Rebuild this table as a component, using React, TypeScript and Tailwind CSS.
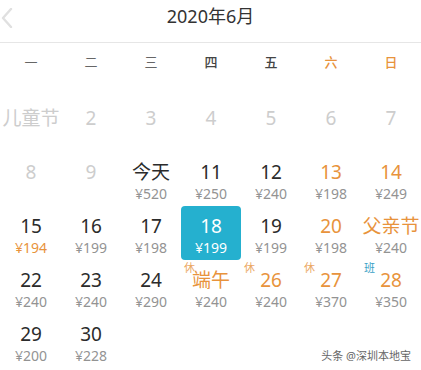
type Day = {
  label: string;
  price?: string;
  tone?: "gray" | "dark" | "orange";
  cheap?: boolean;
  tag?: "休" | "班";
  selected?: boolean;
};

const weekdays = ["一", "二", "三", "四", "五", "六", "日"];

const rows: (Day | null)[][] = [
  [
    { label: "儿童节", tone: "gray" },
    { label: "2", tone: "gray" },
    { label: "3", tone: "gray" },
    { label: "4", tone: "gray" },
    { label: "5", tone: "gray" },
    { label: "6", tone: "gray" },
    { label: "7", tone: "gray" },
  ],
  [
    { label: "8", tone: "gray" },
    { label: "9", tone: "gray" },
    { label: "今天", price: "¥520" },
    { label: "11", price: "¥250" },
    { label: "12", price: "¥240" },
    { label: "13", price: "¥198", tone: "orange" },
    { label: "14", price: "¥249", tone: "orange" },
  ],
  [
    { label: "15", price: "¥194", cheap: true },
    { label: "16", price: "¥199" },
    { label: "17", price: "¥198" },
    { label: "18", price: "¥199", selected: true },
    { label: "19", price: "¥199" },
    { label: "20", price: "¥198", tone: "orange" },
    { label: "父亲节", price: "¥240", tone: "orange" },
  ],
  [
    { label: "22", price: "¥240" },
    { label: "23", price: "¥240" },
    { label: "24", price: "¥290" },
    { label: "端午", price: "¥240", tone: "orange", tag: "休" },
    { label: "26", price: "¥240", tone: "orange", tag: "休" },
    { label: "27", price: "¥370", tone: "orange", tag: "休" },
    { label: "28", price: "¥350", tone: "orange", tag: "班" },
  ],
  [
    { label: "29", price: "¥200" },
    { label: "30", price: "¥228" },
    null,
    null,
    null,
    null,
    null,
  ],
];

const Cell = ({ day }: { day: Day | null }) => {
  if (!day) return <div className="h-[54px]" />;

  let numColor = "text-[#2b2b2b]";
  if (day.tone === "gray") numColor = "text-[#cdcdcd]";
  if (day.tone === "orange") numColor = "text-[#e8933c]";
  if (day.selected) numColor = "text-white";

  let priceColor = "text-[#939393]";
  if (day.cheap) priceColor = "text-[#e8933c]";
  if (day.selected) priceColor = "text-white";

  return (
    <div
      className={
        "relative flex h-[54px] flex-col items-center pt-[8px] " +
        (day.selected ? "rounded-[4px] bg-[#25b0cf]" : "")
      }
    >
      {day.tag && (
        <span
          className={
            "absolute left-[3px] top-[2px] text-[11px] leading-[11px] " +
            (day.tag === "班" ? "text-[#3a9fc6]" : "text-[#eba864]")
          }
        >
          {day.tag}
        </span>
      )}
      <span className={"text-[19px] leading-[25px] " + numColor}>{day.label}</span>
      {day.price && (
        <span className={"text-[14px] leading-[17px] " + priceColor}>{day.price}</span>
      )}
    </div>
  );
};

export default function App() {
  return (
    <div
      className="relative h-[370px] w-[421px] overflow-hidden bg-white"
      style={{ fontFamily: '"Noto Sans", "Noto Sans CJK SC", sans-serif' }}
    >
      <div className="relative flex h-[43px] items-center justify-center border-b border-[#e6e6e6]">
        <svg
          className="absolute left-[1px] top-[8px]"
          width="12"
          height="20"
          viewBox="0 0 12 20"
          fill="none"
        >
          <polyline
            points="10,1 2,10 10,19"
            stroke="#e0e0e0"
            strokeWidth="2.4"
            strokeLinecap="round"
            strokeLinejoin="round"
          />
        </svg>
        <span className="-mt-[10px] text-[18px] text-[#333]">2020年6月</span>
      </div>

      <div className="ml-[1px] grid h-[40px] w-[420px] grid-cols-7 items-center">
        {weekdays.map((w, i) => (
          <span
            key={w}
            className={
              "text-center text-[13px] " +
              (i >= 5
                ? "font-medium text-[#e8933c]"
                : i >= 3
                  ? "font-medium text-[#444]"
                  : "text-[#666]")
            }
          >
            {w}
          </span>
        ))}
      </div>

      <div className="ml-[1px] mt-[15px] grid w-[420px] grid-cols-7">
        {rows.map((row, r) =>
          row.map((day, c) => <Cell key={r + "-" + c} day={day} />)
        )}
      </div>

      <span
        className="absolute bottom-[6px] right-[10px] text-[11px] text-[#666]"
        style={{ textShadow: "0 0 2px #fff, 0 0 2px #fff" }}
      >
        头条 @深圳本地宝
      </span>
    </div>
  );
}
